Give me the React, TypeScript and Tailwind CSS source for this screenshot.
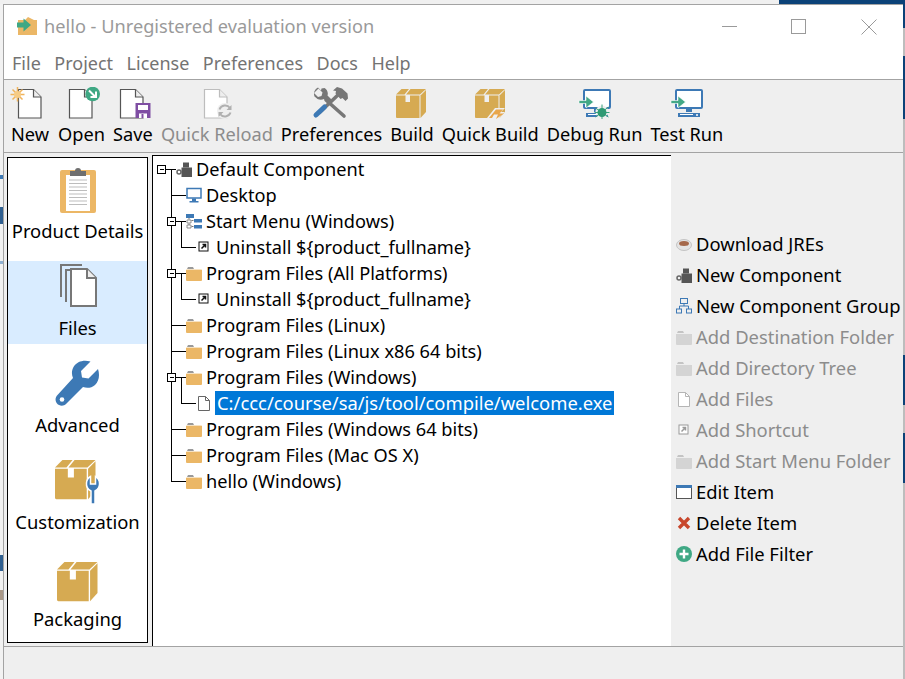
import type { ReactNode } from "react";

const FOLDER = "#ebb766";

function Doc({ x = 0, stroke = "#555555" }: { x?: number; stroke?: string }) {
  return (
    <g transform={`translate(${x} 0)`} fill="#ffffff" stroke={stroke} strokeWidth="1.2">
      <path d="M.5 2.500h15l7.500 7.500v21H.5z" />
      <path d="M15.500 2.500V10H23" fill="#eeeeee" />
    </g>
  );
}

function BoxShape({ color = "#d6aa52" }: { color?: string }) {
  return (
    <g fill={color}>
      <path d="M0 5.500 5.500 0H13L8.500 5.500z" />
      <path d="M14.500 0H30l-6 5.500H10z" />
      <path d="M0 6.500h9.500V13H14V6.500h9.500V29H1a1 1 0 0 1-1-1z" />
      <path d="M24.500 6.500 30 1v22l-5.500 6z" />
    </g>
  );
}

function ToolIcon({ children }: { children: ReactNode }) {
  return (
    <svg width="40" height="32" viewBox="0 0 40 32" className="block">
      {children}
    </svg>
  );
}

function Sun() {
  return (
    <g stroke="#f0b35c" strokeWidth="1.5">
      <path d="M7.500 0v14.500M.5 7.500h14M2.500 2.500l10 10M12.500 2.500l-10 10" />
      <circle cx="7.500" cy="7.500" r="3.500" fill="#f6cb85" stroke="none" />
    </g>
  );
}

function MonitorShape() {
  return (
    <g>
      <rect x="9" y="3" width="26" height="18" rx="1" fill="#ffffff" stroke="#3d79b5" strokeWidth="2" />
      <path d="M19 22h6v3h-6z" fill="#3d79b5" />
      <path d="M11 26h22v4H11z" fill="#3d79b5" />
      <path d="M13 27.500h13" stroke="#ffffff" strokeWidth="1" />
      <circle cx="30" cy="28" r="1" fill="#ffffff" />
    </g>
  );
}

function GreenArrow() {
  return <path d="M4 13.500h7V9l7.500 6-7.500 6v-4.500H4z" fill="#43a886" stroke="#ffffff" strokeWidth=".6" />;
}

const toolbar: { label: string; disabled?: boolean; icon: ReactNode }[] = [
  {
    label: "New",
    icon: (
      <ToolIcon>
        <Doc x={8} />
        <Sun />
      </ToolIcon>
    ),
  },
  {
    label: "Open",
    icon: (
      <ToolIcon>
        <Doc x={8} />
        <circle cx="31.700" cy="7" r="7.300" fill="#3fa884" />
        <path d="M28 3.500l6 6M35 4.500v5.500h-5.500" stroke="#ffffff" strokeWidth="2" fill="none" />
      </ToolIcon>
    ),
  },
  {
    label: "Save",
    icon: (
      <ToolIcon>
        <Doc x={7} />
        <path d="M22.500 16h15v15h-15z" fill="#7f4ea3" />
        <path d="M25 18h10v5H25zM26 26.500h8V31h-8z" fill="#ffffff" />
        <path d="M28.500 27h2v4h-2z" fill="#7f4ea3" />
      </ToolIcon>
    ),
  },
  {
    label: "Quick Reload",
    disabled: true,
    icon: (
      <ToolIcon>
        <Doc x={7} stroke="#bdbdbd" />
        <circle cx="28" cy="24" r="8" fill="#efefef" />
        <path d="M22.500 22.500a6 6 0 0 1 10.500-1.500M33.500 25.500a6 6 0 0 1-10.500 1.500" stroke="#b0b0b0" strokeWidth="2" fill="none" />
        <path d="M34.500 18v5h-5zM21.500 30v-5h5z" fill="#b0b0b0" />
      </ToolIcon>
    ),
  },
  {
    label: "Preferences",
    icon: (
      <ToolIcon>
        <path d="M14 13 32 29" stroke="#777777" strokeWidth="3.600" strokeLinecap="round" />
        <path d="M9 3.500 6 .5a7 7 0 0 0-3.500 9l3 2.500c2 1 4.500 1 6.500 0l4 4 3.500-3.500-4-4c1-3-.5-6-3-7.500L9.500 1.500z" fill="#777777" />
        <path d="M6.500 1.500l4 4-1 3.500-3.500 1-4-4z" fill="#efefef" />
        <path d="M7 26 27 7" stroke="#777777" strokeWidth="3.600" />
        <path d="M21 3.500 25 0l5 1.500 5.500 5 .5 5-2.500 2.500-3-3-2 1-5-5.500.5-2.500z" fill="#777777" />
        <path d="M4 28 12.500 20" stroke="#3d79b5" strokeWidth="5" strokeLinecap="round" />
      </ToolIcon>
    ),
  },
  {
    label: "Build",
    icon: (
      <ToolIcon>
        <g transform="translate(4 2)">
          <BoxShape />
        </g>
      </ToolIcon>
    ),
  },
  {
    label: "Quick Build",
    icon: (
      <ToolIcon>
        <g transform="translate(5 2)">
          <BoxShape />
          <path d="M12 29 20 19h10l-4 4h4L22 31z" fill="#efefef" />
          <path d="M14 29l7-8.500h7l-3.500 4H29L21 30l2-4.500h-4L17 29z" fill="#e9a64a" />
        </g>
      </ToolIcon>
    ),
  },
  {
    label: "Debug Run",
    icon: (
      <ToolIcon>
        <MonitorShape />
        <GreenArrow />
        <circle cx="27" cy="25" r="6.500" fill="#efefef" />
        <path d="M20.500 21l13 9M33.500 20l-13 10M27 17.500V32M19.500 25.500h15" stroke="#3aa37f" strokeWidth="1" />
        <circle cx="27" cy="25.500" r="4.500" fill="#2f9a74" />
      </ToolIcon>
    ),
  },
  {
    label: "Test Run",
    icon: (
      <ToolIcon>
        <MonitorShape />
        <GreenArrow />
      </ToolIcon>
    ),
  },
];

function Clipboard() {
  return (
    <svg width="38" height="48" viewBox="0 0 38 48" className="block">
      <rect x="1" y="4" width="36" height="43" rx="2" fill="#ecb765" />
      <path d="M7 9h24v36H7z" fill="#ffffff" />
      <path d="M11 5h5a3 3 0 0 1 6 0h5v5H11z" fill="#6f6f6f" />
      <path d="M10 14h18M10 17.500h18M10 21h18M10 24.500h18M10 28h18M10 31.500h18M10 35h18M10 38.500h18" stroke="#bdbdbd" strokeWidth="1" />
    </svg>
  );
}

function FilesIcon() {
  return (
    <svg width="38" height="48" viewBox="0 0 38 48" className="block">
      <g fill="none" stroke="#777777" strokeWidth="2">
        <path d="M2 34V2h21" />
        <path d="M7 39V7h22" />
        <path d="M12 6h16l9 9v28H12z" fill="#ffffff" />
        <path d="M28 6v9h9" fill="#eeeeee" />
      </g>
    </svg>
  );
}

function Wrench() {
  return (
    <svg width="46" height="48" viewBox="0 0 46 48" className="block">
      <path
        d="M43 9 33.500 18.500 27 17.500l-1-6.500L35.500 1.500C29 -.5 22 1 18.500 7c-2 3.500-2 7.500-.5 11L2.500 35c-2.500 2.500-2.500 6 -.5 8.500s6.500 3 9 .5L28 27c4 1.500 8.500 1 12-2 4-3.500 5-10 3-16z"
        fill="#3d79b5"
      />
      <circle cx="7" cy="39.500" r="2.300" fill="#ffffff" />
    </svg>
  );
}

function CustomBox() {
  return (
    <svg width="46" height="48" viewBox="0 0 46 48" className="block">
      <g transform="translate(0 3) scale(1.350)">
        <BoxShape />
      </g>
      <path d="M36 47V34a8 8 0 0 1-4.500-8 8 8 0 0 1 4-6.500V27h5v-7.500a8 8 0 0 1 4 6.500 8 8 0 0 1-4.500 8v13z" fill="#3d79b5" stroke="#ffffff" strokeWidth="1.500" />
    </svg>
  );
}

function PackBox() {
  return (
    <svg width="42" height="48" viewBox="0 0 42 48" className="block">
      <g transform="translate(0 8) scale(1.350)">
        <BoxShape />
      </g>
    </svg>
  );
}

const sideItems: { label: string; active?: boolean; icon: ReactNode }[] = [
  { label: "Product Details", icon: <Clipboard /> },
  { label: "Files", active: true, icon: <FilesIcon /> },
  { label: "Advanced", icon: <Wrench /> },
  { label: "Customization", icon: <CustomBox /> },
  { label: "Packaging", icon: <PackBox /> },
];

function Small({ children }: { children: ReactNode }) {
  return (
    <svg width="16" height="16" viewBox="0 0 16 16" className="block shrink-0">
      {children}
    </svg>
  );
}

function Folder({ gray }: { gray?: boolean }) {
  return (
    <Small>
      <path d="M1 4l1-2h5l1 2z" fill={gray ? "#c4c4c4" : "#9a9a9a"} />
      <rect x="0" y="4" width="16" height="12" rx="1" fill={gray ? "#d4d4d4" : FOLDER} />
      <path d="M0 4.500h16" stroke="#ffffff" strokeWidth=".6" />
    </Small>
  );
}

function ComponentIcon() {
  return (
    <Small>
      <circle cx="3" cy="11" r="2" fill="none" stroke="#666666" strokeWidth="1.500" />
      <path d="M7 1.500h6v5H7z" fill="#555555" />
      <path d="M5.500 6.500h10.500V16H5.500z" fill="#555555" />
    </Small>
  );
}

function Shortcut({ gray }: { gray?: boolean }) {
  const c = gray ? "#9a9a9a" : "#111111";
  return (
    <Small>
      <rect x="3" y="3" width="9" height="9" fill="#ffffff" stroke={c} strokeWidth="1" />
      <path d="M5.500 9.500 9 6M6.500 5.500h3v3" fill="none" stroke={c} strokeWidth="1.500" />
    </Small>
  );
}

function FileSmall({ gray }: { gray?: boolean }) {
  const c = gray ? "#b5b5b5" : "#666666";
  return (
    <Small>
      <path d="M2.500 1.500h7l4 4v10h-11z" fill="#ffffff" stroke={c} />
      <path d="M9.500 1.500v4h4" fill="none" stroke={c} />
    </Small>
  );
}

function MonitorSmall() {
  return (
    <Small>
      <rect x="1" y="1.500" width="14" height="9.500" fill="#ffffff" stroke="#3d79b5" strokeWidth="1.500" />
      <path d="M6 11.500h4V14H6zM3.500 14h9v1.500h-9z" fill="#3d79b5" />
    </Small>
  );
}

function MenuTree() {
  return (
    <Small>
      <path d="M0 1h8v4H0zM8 6h8v3.500H8zM8 12h8v3.500H8z" fill="#3d79b5" />
      <path d="M3 5v9M3 7.500h5M3 13.500h5" stroke="#777777" strokeWidth="1" strokeDasharray="1 .5" />
      <path d="M1 7h4v3H1zM1 12h4v3H1z" fill="#ffffff" stroke="#777777" strokeWidth=".8" />
    </Small>
  );
}

type Conn = "root" | "mid" | "open" | "leaf" | "last";

// connectors of one row, x measured from the tree's inner left edge
function Gutter({ kind }: { kind: Conn }) {
  const width = kind === "root" ? 21 : kind === "leaf" ? 41 : 31;
  return (
    <svg width={width} height="26" viewBox={`0 0 ${width} 26`} className="block shrink-0" shapeRendering="crispEdges">
      <g stroke="#000000" strokeWidth="1" fill="none">
        {kind === "root" && (
          <>
            <path d="M16.500 14V26M11 13.500h10" />
            <rect x="2.500" y="9.500" width="8" height="8" fill="#ffffff" />
            <path d="M4.500 13.500h4" />
          </>
        )}
        {kind === "mid" && <path d="M16.500 0V26M16.500 13.500H31" />}
        {kind === "last" && <path d="M16.500 0V13.500H31" />}
        {kind === "open" && (
          <>
            <path d="M16.500 0V26M26.500 14V26M20 13.500h11" />
            <rect x="12.500" y="9.500" width="8" height="8" fill="#ffffff" />
            <path d="M14.500 13.500h4" />
          </>
        )}
        {kind === "leaf" && <path d="M16.500 0V26M26.500 0V13.500H41" />}
      </g>
    </svg>
  );
}

const treeRows: { kind: Conn; icon: ReactNode; label: string; selected?: boolean }[] = [
  { kind: "root", icon: <ComponentIcon />, label: "Default Component" },
  { kind: "mid", icon: <MonitorSmall />, label: "Desktop" },
  { kind: "open", icon: <MenuTree />, label: "Start Menu (Windows)" },
  { kind: "leaf", icon: <Shortcut />, label: "Uninstall ${product_fullname}" },
  { kind: "open", icon: <Folder />, label: "Program Files (All Platforms)" },
  { kind: "leaf", icon: <Shortcut />, label: "Uninstall ${product_fullname}" },
  { kind: "mid", icon: <Folder />, label: "Program Files (Linux)" },
  { kind: "mid", icon: <Folder />, label: "Program Files (Linux x86 64 bits)" },
  { kind: "open", icon: <Folder />, label: "Program Files (Windows)" },
  { kind: "leaf", icon: <FileSmall />, label: "C:/ccc/course/sa/js/tool/compile/welcome.exe", selected: true },
  { kind: "mid", icon: <Folder />, label: "Program Files (Windows 64 bits)" },
  { kind: "mid", icon: <Folder />, label: "Program Files (Mac OS X)" },
  { kind: "last", icon: <Folder />, label: "hello (Windows)" },
];

const actions: { label: string; disabled?: boolean; icon: ReactNode }[] = [
  {
    label: "Download JREs",
    icon: (
      <Small>
        <ellipse cx="8" cy="9" rx="7.500" ry="5.500" fill="#e4e4e4" stroke="#c4c4c4" />
        <ellipse cx="8" cy="7.500" rx="5" ry="2.500" fill="#a5684a" />
      </Small>
    ),
  },
  { label: "New Component", icon: <ComponentIcon /> },
  {
    label: "New Component Group",
    icon: (
      <Small>
        <g fill="none" stroke="#3d79b5" strokeWidth="1">
          <rect x="4.500" y=".5" width="7" height="5" />
          <path d="M8 5.500V8M3.500 11V8h9v3" />
          <rect x=".5" y="11" width="5" height="4" />
          <rect x="10.500" y="11" width="5" height="4" />
        </g>
      </Small>
    ),
  },
  { label: "Add Destination Folder", disabled: true, icon: <Folder gray /> },
  { label: "Add Directory Tree", disabled: true, icon: <Folder gray /> },
  { label: "Add Files", disabled: true, icon: <FileSmall gray /> },
  { label: "Add Shortcut", disabled: true, icon: <Shortcut gray /> },
  { label: "Add Start Menu Folder", disabled: true, icon: <Folder gray /> },
  {
    label: "Edit Item",
    icon: (
      <Small>
        <rect x=".5" y="1.500" width="15" height="13" fill="#ffffff" stroke="#555555" />
        <path d="M0 1h16v3H0z" fill="#3d79b5" />
      </Small>
    ),
  },
  {
    label: "Delete Item",
    icon: (
      <Small>
        <path d="M3 3l10 10M13 3 3 13" stroke="#c8472c" strokeWidth="3.400" />
      </Small>
    ),
  },
  {
    label: "Add File Filter",
    icon: (
      <Small>
        <circle cx="8" cy="8" r="8" fill="#3fa884" />
        <path d="M8 3.500v9M3.500 8h9" stroke="#ffffff" strokeWidth="2.400" />
      </Small>
    ),
  },
];

export default function App() {
  return (
    <div className="flex flex-col w-[905px] h-[679px] overflow-hidden bg-[#f0f0f0] text-[18.4px] text-black font-['Noto_Sans',sans-serif]">
      <div className="flex h-[4px] shrink-0">
        <div className="w-[779px] bg-[#f0f0f0]" />
        <div className="flex-1 bg-[#0c4278]" />
      </div>
      <div className="flex flex-1 min-h-0">
        <div className="flex flex-col w-[3px] shrink-0 bg-[#f2f2f2]">
          <div className="h-[171px]" />
          <div className="h-[4px] bg-[#3d79b5]" />
          <div className="h-[28px]" />
          <div className="h-[17px] bg-[#2f5f90]" />
          <div className="h-[37px]" />
          <div className="h-[3px] bg-[#8fb1d2]" />
          <div className="h-[291px]" />
          <div className="h-[16px] bg-[#2f5f90]" />
          <div className="h-[19px]" />
          <div className="h-[10px] bg-[#a99888]" />
        </div>

        <div className="flex flex-col flex-1 min-w-0 border-l border-t border-[#a3a3a3] bg-[#efefef]">
          <div className="flex flex-col h-[75px] shrink-0 bg-white border-b border-[#a3a3a3]">
            <div className="flex items-center h-[43px] shrink-0 pl-[12px]">
              <svg width="24" height="22" viewBox="0 0 24 22" className="block shrink-0 mt-[-2px]">
                <path d="M2 5h7l3-3 6 3h3v15H2z" fill={FOLDER} />
                <path d="M1 7.500h6.500V3.500L15 10l-7.500 6.500v-4H1z" fill="#3fa884" />
              </svg>
              <span className="ml-[4px] text-[18.2px] text-[#9a9a9a]">hello - Unregistered evaluation version</span>
              <div className="flex items-center ml-auto">
                <span className="w-[15px] h-px bg-[#9a9a9a]" />
                <span className="w-[15px] h-[15px] ml-[54px] border border-[#9a9a9a]" />
                <svg width="16" height="16" viewBox="0 0 16 16" className="block ml-[55px] mr-[26px]">
                  <path d="M.5.5l15 15M15.500.5l-15 15" stroke="#9a9a9a" strokeWidth="1" />
                </svg>
              </div>
            </div>
            <div className="flex items-center gap-[13.5px] h-[31px] pl-[8px] text-[18px] text-[#737373]">
              <span>File</span>
              <span>Project</span>
              <span>License</span>
              <span>Preferences</span>
              <span>Docs</span>
              <span>Help</span>
            </div>
          </div>

          <div className="flex gap-[8px] h-[73px] shrink-0 pt-[7px] pl-[6px] text-[18.2px] border-b border-[#a3a3a3]">
            {toolbar.map((item) => (
              <div key={item.label} className={`flex flex-col items-center ${item.disabled ? "text-[#8c8c8c]" : ""}`}>
                {item.icon}
                <span className="mt-[3px] leading-[24px] whitespace-nowrap">{item.label}</span>
              </div>
            ))}
          </div>

          <div className="flex flex-1 min-h-0">
            <div className="flex flex-col gap-[14px] w-[141px] shrink-0 mt-[4px] mb-[3px] ml-[3px] pt-[6px] bg-white border border-black">
              {sideItems.map((item) => (
                <div key={item.label} className={`flex flex-col items-center h-[83px] shrink-0 ${item.active ? "bg-[#d9ecff]" : ""}`}>
                  <div className="mt-[2px] h-[48px]">{item.icon}</div>
                  <span className="leading-[24px] mt-[5px] whitespace-nowrap">{item.label}</span>
                </div>
              ))}
            </div>

            <div className="flex flex-col w-[519px] shrink-0 mt-[2px] ml-[4px] pl-[2px] text-[18.2px] bg-white border-l border-t border-black">
              {treeRows.map((row, i) => (
                <div key={i} className="flex items-center h-[26px] shrink-0">
                  <Gutter kind={row.kind} />
                  {row.icon}
                  <span
                    className={`whitespace-nowrap leading-[24px] ${
                      row.selected ? "ml-[3px] px-[2px] text-[18.4px] bg-[#0078d7] text-white" : "ml-[4px]"
                    }`}
                  >
                    {row.label}
                  </span>
                </div>
              ))}
            </div>

            <div className="flex flex-col justify-center flex-1 min-w-0 pl-[5px] pb-[2px]">
              {actions.map((item) => (
                <div key={item.label} className={`flex items-center gap-[4px] h-[31px] shrink-0 ${item.disabled ? "text-[#8c8c8c]" : ""}`}>
                  {item.icon}
                  <span className="whitespace-nowrap">{item.label}</span>
                </div>
              ))}
            </div>
          </div>

          <div className="h-[33px] shrink-0 border-t border-[#a3a3a3]" />
        </div>

        <div className="flex flex-col w-[2px] shrink-0 bg-[#bdbdbd]">
          <div className="h-[24px] bg-[#0c4278]" />
          <div className="h-[28px]" />
          <div className="h-[63px] bg-[#0c4278]" />
          <div className="h-[236px]" />
          <div className="h-[50px] bg-[#0c4278]" />
          <div className="h-[28px]" />
          <div className="h-[50px] bg-[#0c4278]" />
        </div>
      </div>
    </div>
  );
}
